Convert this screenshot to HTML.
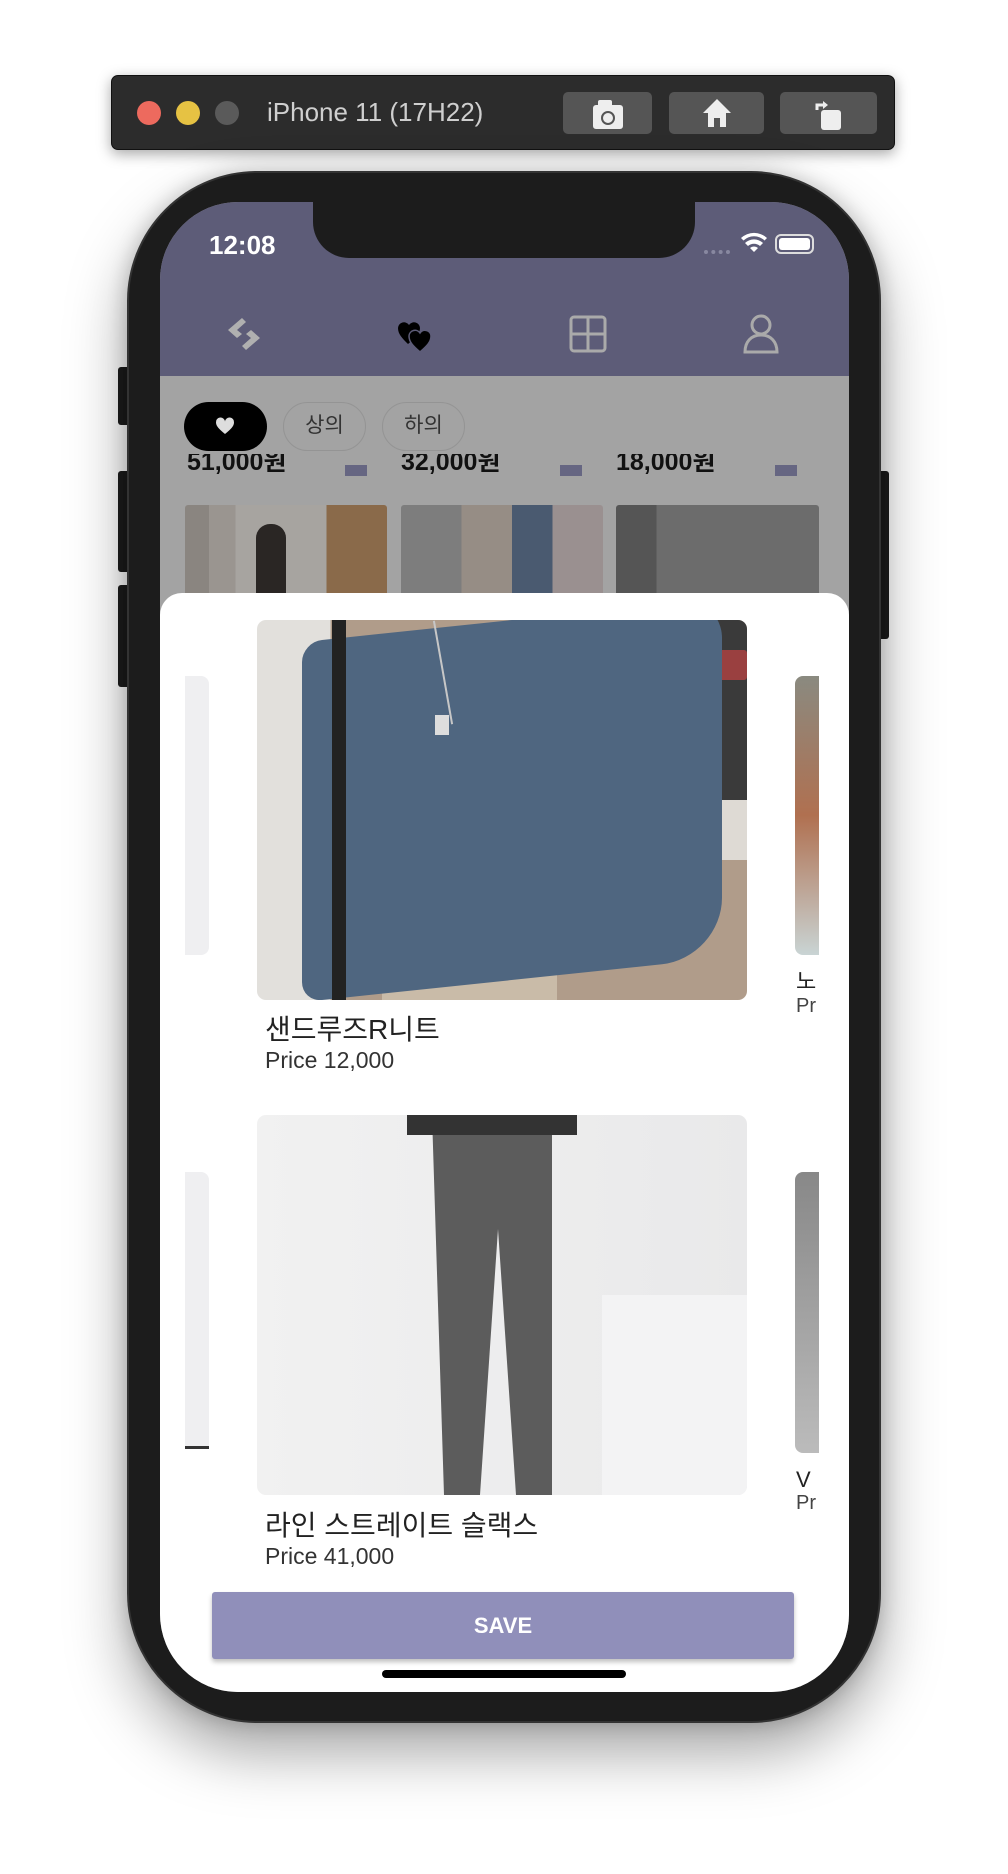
<!DOCTYPE html>
<html><head><meta charset="utf-8"><style>
*{margin:0;padding:0;box-sizing:border-box}
body{width:1008px;height:1874px;background:#fff;position:relative;overflow:hidden;font-family:"Liberation Sans","Noto Sans CJK KR",sans-serif}
.a{position:absolute}
</style></head><body>
<!-- window bar -->
<div class="a" style="left:111px;top:75px;width:784px;height:75px;background:#2c2c2c;border-radius:7px;border:1px solid #111;box-shadow:0 4px 14px rgba(0,0,0,.35)"></div>
<div class="a" style="left:137px;top:101px;width:24px;height:24px;border-radius:50%;background:#ed6a5e"></div>
<div class="a" style="left:176px;top:101px;width:24px;height:24px;border-radius:50%;background:#e6c243"></div>
<div class="a" style="left:215px;top:101px;width:24px;height:24px;border-radius:50%;background:#5a5a5a"></div>
<div class="a" style="left:267px;top:97px;color:#cfcfcf;font-size:26px">iPhone 11 (17H22)</div>
<div class="a" style="left:563px;top:92px;width:89px;height:42px;background:#555;border-radius:5px"></div>
<div class="a" style="left:669px;top:92px;width:95px;height:42px;background:#555;border-radius:5px"></div>
<div class="a" style="left:780px;top:92px;width:97px;height:42px;background:#555;border-radius:5px"></div>
<svg class="a" style="left:590px;top:96px" width="36" height="36" viewBox="0 0 36 36"><rect x="3" y="9" width="30" height="24" rx="3" fill="#eee"/><rect x="8" y="4" width="14" height="8" rx="2" fill="#eee"/><circle cx="18" cy="22" r="6" fill="none" stroke="#555" stroke-width="2"/></svg>
<svg class="a" style="left:700px;top:96px" width="34" height="34" viewBox="0 0 34 34"><path d="M17 3L3 17h5v14h18V17h5z" fill="#eee"/><rect x="14" y="22" width="6" height="9" fill="#555"/></svg>
<svg class="a" style="left:811px;top:96px" width="34" height="36" viewBox="0 0 34 36"><rect x="10" y="14" width="20" height="20" rx="3" fill="#eee"/><path d="M6 14V9h8" fill="none" stroke="#eee" stroke-width="3"/><path d="M12 5l5 4-5 4z" fill="#eee"/></svg>

<!-- phone -->
<div class="a" style="left:118px;top:367px;width:12px;height:58px;background:#1c1c1c;border-radius:3px"></div>
<div class="a" style="left:118px;top:471px;width:12px;height:101px;background:#1c1c1c;border-radius:3px"></div>
<div class="a" style="left:118px;top:585px;width:12px;height:102px;background:#1c1c1c;border-radius:3px"></div>
<div class="a" style="left:877px;top:471px;width:12px;height:168px;background:#1c1c1c;border-radius:3px"></div>
<div class="a" style="left:127px;top:171px;width:754px;height:1552px;background:#1c1c1c;border-radius:130px;box-shadow:0 30px 60px rgba(0,0,0,.35),0 0 20px rgba(0,0,0,.2);border:2px solid #333"></div>

<!-- screen -->
<div class="a" style="left:160px;top:202px;width:689px;height:1490px;border-radius:78px;overflow:hidden;background:#a3a3a3">
  <div class="a" style="left:0;top:0;width:689px;height:174px;background:#5d5c78"></div>
  <div class="a" style="left:153px;top:-10px;width:382px;height:66px;background:#1c1c1c;border-radius:0 0 36px 36px"></div>
  <div class="a" style="left:49px;top:28px;color:#fff;font-size:26px;font-weight:bold">12:08</div>
  <div class="a" style="left:544px;top:48px;width:26px;height:4px;border-top:4px dotted #8888a0"></div>
  <svg class="a" style="left:580px;top:30px" width="28" height="22" viewBox="0 0 28 22"><path d="M14 20l-4-4a6 6 0 0 1 8 0z" fill="#fff"/><path d="M5 11a13 13 0 0 1 18 0l-3 3a9 9 0 0 0-12 0z" fill="#fff"/><path d="M1 6a19 19 0 0 1 26 0l-2.5 2.5a15 15 0 0 0-21 0z" fill="#fff"/></svg>
  <div class="a" style="left:615px;top:32px;width:39px;height:20px;border:2px solid #ddd;border-radius:6px;padding:2px"><div style="width:100%;height:100%;background:#fff;border-radius:3px"></div></div>
  <!-- nav icons -->
  <svg class="a" style="left:64px;top:112px" width="40" height="40" viewBox="0 0 40 40"><path d="M18 4L4 16l9 8 5-4-5-4 9-8z" fill="#b0b0b0"/><path d="M22 36l14-12-9-8-5 4 5 4-9 8z" fill="#b0b0b0"/></svg>
  <svg class="a" style="left:236px;top:112px" width="40" height="40" viewBox="0 0 40 40"><path d="M12 30C6 24 2 20 2 14a6 6 0 0 1 11-3 6 6 0 0 1 11 3c0 6-5 10-12 16z" fill="#000"/><path d="M24 38c-7-6-11-10-11-16a6 6 0 0 1 11-3 6 6 0 0 1 11 3c0 6-4 10-11 16z" fill="#000" stroke="#5d5c78" stroke-width="1.5"/></svg>
  <svg class="a" style="left:409px;top:113px" width="38" height="38" viewBox="0 0 38 38"><rect x="2" y="2" width="34" height="34" rx="3" fill="none" stroke="#aaa" stroke-width="3"/><path d="M19 2v34M2 19h34" stroke="#aaa" stroke-width="3"/></svg>
  <svg class="a" style="left:582px;top:112px" width="38" height="40" viewBox="0 0 38 40"><circle cx="19" cy="11" r="9" fill="none" stroke="#aaa" stroke-width="3"/><path d="M3 38c0-10 6-17 16-17s16 7 16 17z" fill="none" stroke="#aaa" stroke-width="3"/></svg>

  <!-- prices row clipped -->
  <div class="a" style="left:0;top:252px;width:689px;height:50px;overflow:hidden">
    <div class="a" style="left:27px;top:-12px;font-size:25px;font-weight:bold;color:#111">51,000원</div>
    <div class="a" style="left:241px;top:-12px;font-size:25px;font-weight:bold;color:#111">32,000원</div>
    <div class="a" style="left:456px;top:-12px;font-size:25px;font-weight:bold;color:#111">18,000원</div>
    <div class="a" style="left:185px;top:11px;width:22px;height:11px;background:#666682"></div>
    <div class="a" style="left:400px;top:11px;width:22px;height:11px;background:#666682"></div>
    <div class="a" style="left:615px;top:11px;width:22px;height:11px;background:#666682"></div>
  </div>
  <div class="a" style="left:0;top:174px;width:689px;height:78px;background:#a3a3a3"></div>
  <!-- chips -->
  <div class="a" style="left:24px;top:200px;width:83px;height:49px;background:#000;border-radius:25px"></div>
  <svg class="a" style="left:55px;top:215px" width="20" height="18" viewBox="0 0 20 18"><path d="M10 17C4 12 1 9 1 5.5a4.5 4.5 0 0 1 9-1 4.5 4.5 0 0 1 9 1C19 9 16 12 10 17z" fill="#ddd"/></svg>
  <div class="a" style="left:123px;top:200px;width:83px;height:49px;border:1.5px solid #949494;border-radius:25px;color:#333;font-size:21px;text-align:center;line-height:46px">상의</div>
  <div class="a" style="left:222px;top:200px;width:83px;height:49px;border:1.5px solid #949494;border-radius:25px;color:#333;font-size:21px;text-align:center;line-height:46px">하의</div>

  <div class="a" style="left:25px;top:303px;width:202px;height:100px;background:linear-gradient(90deg,#8a8580 0 12%,#9a9590 12% 25%,#a7a4a0 25% 70%,#8a6a4a 70%);border-radius:3px"></div>
  <div class="a" style="left:96px;top:322px;width:30px;height:80px;background:#2a2624;border-radius:14px 14px 0 0"></div>
  <div class="a" style="left:241px;top:303px;width:202px;height:100px;background:linear-gradient(90deg,#7d7d7d 0 30%,#968d85 30% 55%,#4a5a70 55% 75%,#9a9090 75%);border-radius:3px"></div>
  <div class="a" style="left:456px;top:303px;width:203px;height:100px;background:linear-gradient(90deg,#555 0 20%,#6c6c6c 20%);border-radius:3px"></div>

  <!-- sheet -->
  <div class="a" style="left:0;top:391px;width:689px;height:1100px;background:#fff;border-radius:22px 22px 0 0"></div>
  <!-- card 1 -->
  <div class="a" style="left:25px;top:474px;width:24px;height:279px;background:#efeff1;border-radius:0 8px 8px 0"></div>
  <div class="a" style="left:635px;top:474px;width:24px;height:279px;background:linear-gradient(180deg,#8a8a80,#b07050 50%,#c9d4d4);border-radius:8px 0 0 8px"></div>
  <div class="a" style="left:636px;top:762px;font-size:22px;color:#222">노</div>
  <div class="a" style="left:636px;top:793px;font-size:20px;color:#444">Pr</div>
  <div class="a" style="left:97px;top:418px;width:490px;height:380px;border-radius:9px;overflow:hidden;background:linear-gradient(90deg,#e2e0dc 0 15%,#b09c8a 15%)">
    <div class="a" style="left:280px;top:0;width:210px;height:180px;background:#3a3a3a"></div>
    <div class="a" style="left:380px;top:30px;width:110px;height:30px;background:#9a4040;border-radius:3px"></div>
    <div class="a" style="left:280px;top:180px;width:210px;height:60px;background:#dedad4"></div>
    <div class="a" style="left:125px;top:330px;width:175px;height:60px;background:#c9bba8"></div>
    <div class="a" style="left:45px;top:0;width:420px;height:360px;background:#4f6680;border-radius:20px 40px 60px 20px;transform:skewY(-6deg)"></div>
    <div class="a" style="left:185px;top:0;width:2px;height:105px;background:#c7c7c7;transform:rotate(-10deg)"></div>
    <div class="a" style="left:178px;top:95px;width:14px;height:20px;background:#ddd"></div>
    <div class="a" style="left:75px;top:0;width:14px;height:380px;background:#222"></div>
  </div>
  <div class="a" style="left:105px;top:806px;font-size:28px;color:#222">샌드루즈R니트</div>
  <div class="a" style="left:105px;top:845px;font-size:23px;color:#333">Price 12,000</div>
  <!-- card 2 -->
  <div class="a" style="left:25px;top:970px;width:24px;height:277px;background:#efeff1;border-bottom:3px solid #333;border-radius:0 8px 0 0"></div>
  <div class="a" style="left:635px;top:970px;width:24px;height:281px;background:linear-gradient(180deg,#888,#bbb);border-radius:8px 0 0 8px"></div>
  <div class="a" style="left:636px;top:1265px;font-size:22px;color:#222">V</div>
  <div class="a" style="left:636px;top:1290px;font-size:20px;color:#444">Pr</div>
  <div class="a" style="left:97px;top:913px;width:490px;height:380px;border-radius:9px;overflow:hidden;background:linear-gradient(90deg,#f1f1f1,#e9e9ea)">
    <div class="a" style="left:345px;top:180px;width:145px;height:200px;background:#f3f3f4"></div>
    <div class="a" style="left:175px;top:0;width:120px;height:380px;background:#5c5c5c;clip-path:polygon(0 0,100% 0,100% 100%,70% 100%,55% 30%,40% 100%,10% 100%)"></div>
    <div class="a" style="left:150px;top:0;width:170px;height:20px;background:#333"></div>
  </div>
  <div class="a" style="left:105px;top:1302px;font-size:28px;color:#222">라인 스트레이트 슬랙스</div>
  <div class="a" style="left:105px;top:1341px;font-size:23px;color:#333">Price 41,000</div>
  <!-- save -->
  <div class="a" style="left:52px;top:1390px;width:582px;height:67px;background:#908fba;border-radius:3px;box-shadow:0 3px 5px rgba(0,0,0,.25);color:#fff;font-size:22px;font-weight:bold;text-align:center;line-height:67px">SAVE</div>
  <div class="a" style="left:222px;top:1468px;width:244px;height:8px;background:#000;border-radius:4px"></div>
</div>
</body></html>
